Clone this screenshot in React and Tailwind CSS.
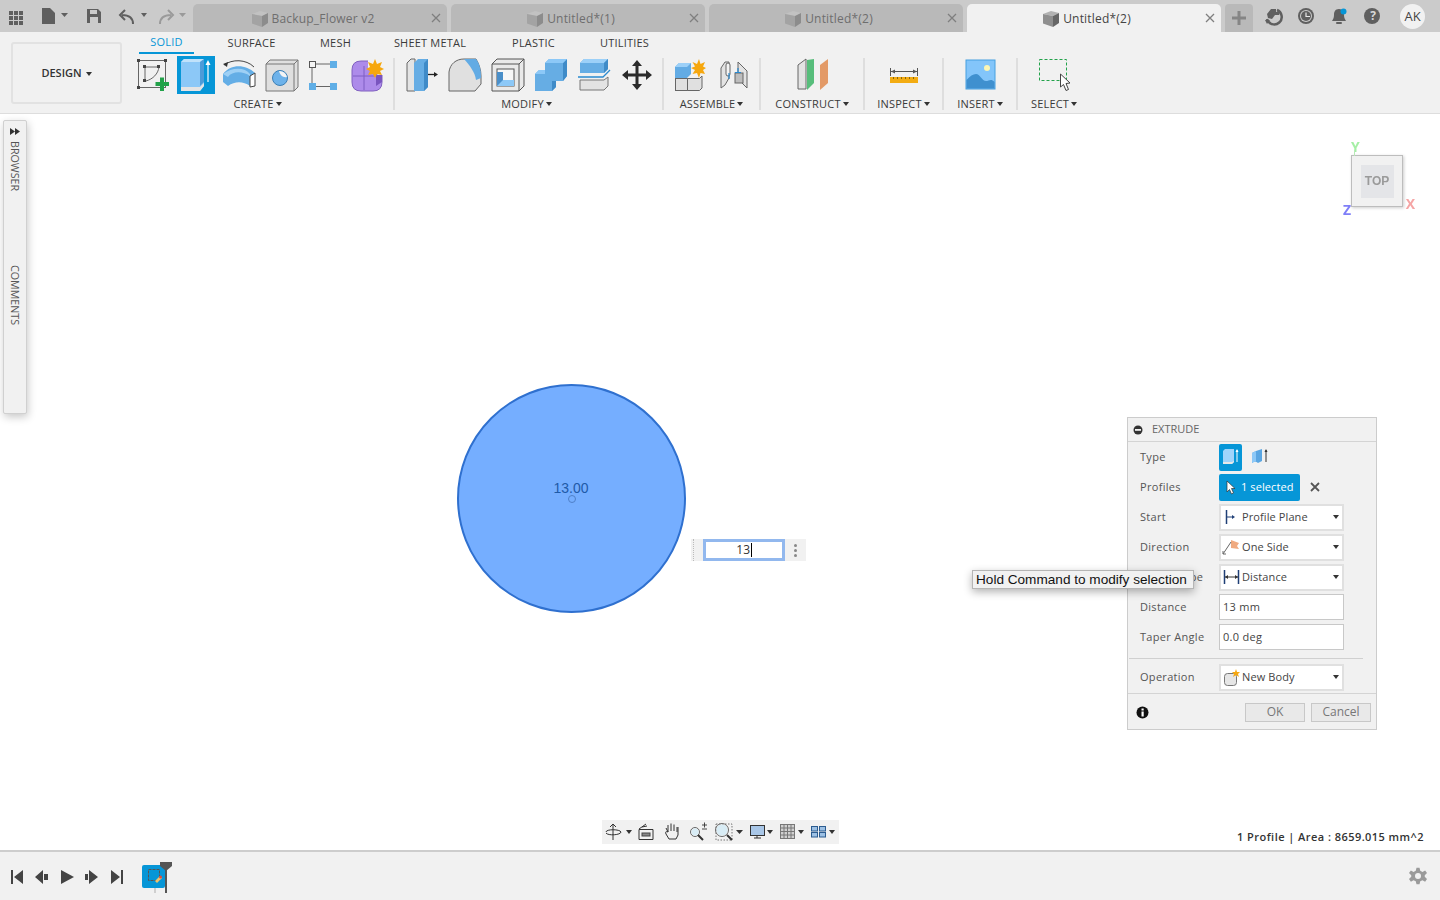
const UI = { fontFamily: '"Open Sans", "DejaVu Sans", sans-serif' };

function Ico({ x, w = 43, y = 55, h = 40, children }) {
  return (
    <svg width={w} height={h} viewBox={`${x} ${y} ${w} ${h}`} className="block shrink-0">
      {children}
    </svg>
  );
}

function Caret({ className = "" }) {
  return <span className={`inline-block w-0 h-0 border-x-[3px] border-x-transparent border-t-[4px] border-t-[#333] ${className}`} />;
}

function TabCube({ dark }) {
  const top = dark ? "#b2b2b2" : "#c2c2c2";
  const left = dark ? "#8f8f8f" : "#a3a3a3";
  const right = dark ? "#666" : "#8c8c8c";
  return (
    <svg width="16" height="16" viewBox="0 0 16 16" className="block shrink-0">
      <path d="M0 3 L8 0 L16 2 L10 5Z" fill={top} />
      <path d="M0 3 L10 5 V16 L0 12.500Z" fill={left} />
      <path d="M10 5 L16 2 V12 L10 16Z" fill={right} />
    </svg>
  );
}

function Tab({ label, active }) {
  return (
    <div className={`relative w-[254px] mr-[4px] h-[28px] mt-[4px] rounded-t-[5px] flex items-center shrink-0 ${active ? "bg-[#f1f1f1] text-[#444]" : "bg-[#b9b9b9] text-[#6e6e6e]"}`}>
      <div className="flex items-center gap-[4px] w-full justify-center pr-[14px] pt-[1px] text-[12px] tracking-[0.2px]">
        <TabCube dark={active} />
        <span>{label}</span>
      </div>
      <svg width="10" height="10" viewBox="0 0 10 10" className="absolute right-[6px] top-[9px]">
        <path d="M1 1 L9 9 M9 1 L1 9" stroke="#7f7f7f" strokeWidth="1.3" />
      </svg>
    </div>
  );
}

function TitleBar() {
  return (
    <div className="flex h-[32px] bg-[#cbcbcb] shrink-0">
      <svg width="193" height="32" viewBox="0 0 193 32" className="block shrink-0">
        <g fill="#5f5f5f">
          {[9, 14, 19].map((x) => [11, 16, 21].map((y) => <rect key={`${x}${y}`} x={x} y={y} width="4" height="4" />))}
          <path d="M42 8 H50 L55 13 V24 H42Z" />
          <path d="M61 13 H68 L64.5 17Z" />
          <path d="M87 9 H98 L101 12 V23 H87Z M90 10 V14 H97 V10Z M90 17 V23 H98 V17Z" fillRule="evenodd" />
          <path d="M141 13 H147 L144 17Z" />
        </g>
        <path d="M133 24 C133 18 129 15 122 15 M125 10 L120 15 L125 20" fill="none" stroke="#5f5f5f" strokeWidth="2" />
        <path d="M160 24 C160 18 164 15 171 15 M168 10 L173 15 L168 20" fill="none" stroke="#9a9a9a" strokeWidth="2" />
        <path d="M179 13 H186 L182.500 17Z" fill="#9a9a9a" />
      </svg>
      <Tab label="Backup_Flower v2" />
      <Tab label="Untitled*(1)" />
      <Tab label="Untitled*(2)" />
      <Tab label="Untitled*(2)" active />
      <div className="w-[28px] h-[28px] mt-[4px] rounded-t-[4px] bg-[#b9b9b9] flex items-center justify-center shrink-0">
        <svg width="14" height="14" viewBox="0 0 14 14"><path d="M7 0 V14 M0 7 H14" stroke="#858585" strokeWidth="3" /></svg>
      </div>
      <svg width="140" height="32" viewBox="1253 0 140 32" className="block shrink-0">
        <path d="M1277 10 A7.500 7.500 0 1 1 1267 19" fill="none" stroke="#5f5f5f" strokeWidth="2.500" />
        <path d="M1271 9 H1276 V12 H1280 L1279 15 L1275 15 L1272 19 L1268 18 L1267 14Z" fill="#5f5f5f" />
        <path d="M1265 20 L1270 20 L1267 24Z" fill="#5f5f5f" />
        <circle cx="1306" cy="16" r="8" fill="#5f5f5f" />
        <circle cx="1306" cy="16" r="6" fill="#cbcbcb" />
        <circle cx="1306" cy="16" r="5" fill="#5f5f5f" />
        <path d="M1306 12.500 V16.500 H1310" fill="none" stroke="#e8e8e8" strokeWidth="1.200" />
        <path d="M1339 9 C1343 9 1344 12 1344 15 C1344 18 1345 19 1346 21 H1332 C1333 19 1334 18 1334 15 C1334 12 1335 9 1339 9Z" fill="#5f5f5f" />
        <rect x="1336" y="22" width="6" height="2" rx="1" fill="#5f5f5f" />
        <circle cx="1343.500" cy="11.500" r="3" fill="#0696d7" />
        <circle cx="1372" cy="16" r="8" fill="#5f5f5f" />
      </svg>
      <div className="relative">
        <span className="absolute left-[-25px] top-[9px] w-[10px] text-center text-[12px] font-bold leading-[14px] text-[#d8d8d8]">?</span>
      </div>
      <div className="ml-[7px] mt-[4px] w-[25px] h-[25px] rounded-full bg-[#f1f1f1] flex items-center justify-center text-[13px] text-[#444]">AK</div>
    </div>
  );
}

const RTABS = [
  ["SOLID", "w-[55px]"],
  ["SURFACE", "w-[115px]"],
  ["MESH", "w-[53px]"],
  ["SHEET METAL", "w-[136px]"],
  ["PLASTIC", "w-[71px]"],
  ["UTILITIES", "w-[111px]"],
];

function Sep() {
  return <div className="w-[2px] h-[52px] mt-[3px] bg-[#dedede] shrink-0" />;
}

function Group({ label, className, labelClass = "", children }) {
  return (
    <div className={`flex flex-col shrink-0 ${className}`}>
      <div className="flex h-[40px]">{children}</div>
      <div className={`flex items-center justify-center gap-[2px] h-[14px] mt-[2px] pt-[1px] text-[11px] tracking-[0.2px] text-[#3a3a3a] ${labelClass}`}>
        {label}
        <Caret className="mb-[2px] !border-x-[3px] !border-t-[4px]" />
      </div>
    </div>
  );
}

function CreateIcons() {
  return (
    <>
      <Ico x={133}>
        <rect x="138.500" y="60.500" width="27" height="27" fill="none" stroke="#666" />
        <path d="M145 67 H158 M145 67 V80" stroke="#666" fill="none" />
        <path d="M159 67 C158 74 153 79 146 81" stroke="#666" fill="none" />
        {[[137, 59], [164, 59], [137, 86], [143, 65], [157, 65], [143, 79]].map(([a, b]) => <rect key={`${a}-${b}`} x={a} y={b} width="3" height="3" fill="#444" />)}
        <path d="M162 77.500 V91 M155.500 84 H169" stroke="#22a24a" strokeWidth="4" />
      </Ico>
      <Ico x={176}>
        <rect x="177" y="56" width="38" height="38" fill="#0696d7" />
        <path d="M181 62 L184 59 H204 L204 86 L200 91 H181Z" fill="#8cc8f7" />
        <path d="M181 62 L184 59 H204 L200 62Z" fill="#c0e2fb" />
        <path d="M200 62 L204 59 V82 L200 86Z" fill="#4d9bd8" />
        <path d="M181 87 H200 L204 83 V86 L200 91 H181Z" fill="#e4e4e4" />
        <path d="M208 82 V63" stroke="#fff" strokeWidth="1.200" />
        <path d="M205.500 65 L208 60 L210.500 65Z" fill="#fff" />
      </Ico>
      <Ico x={219}>
        <path d="M224 65 C232 59 246 59 254 67" fill="none" stroke="#444" strokeWidth="1" />
        <path d="M223 64 L228 62 L227 67Z" fill="#333" />
        <path d="M223 74 C232 63 246 65 255 73 L250 86 C243 81 235 81 228 86 L223 82Z" fill="#64aee6" />
        <path d="M223 74 C232 67 245 67 250 74 L250 76 C243 71 232 71 228 77Z" fill="#9ed0f5" />
        <path d="M250 76 L255 73 L255 86 L250 87Z" fill="#fff" stroke="#444" />
      </Ico>
      <Ico x={262}>
        <path d="M266 64 L270 60 H298 V87 L294 91 H266Z" fill="#dfdfdf" stroke="#777" />
        <path d="M266 64 H294 V91 M294 64 L298 60" fill="none" stroke="#777" />
        <circle cx="280" cy="78" r="7.500" fill="#6db2ea" stroke="#3c7fb5" />
        <path d="M279 71 A7.500 7.500 0 0 1 287 77 C283 78 280 75 279 71Z" fill="#f4f4f4" />
      </Ico>
      <Ico x={305}>
        <path d="M315 64 H330 M312 67 V83 M316 86.500 H330" stroke="#666" />
        <rect x="309.500" y="61.500" width="6" height="6" fill="#f4f4f4" stroke="#555" />
        <rect x="330" y="61" width="7" height="7" fill="#5faee6" />
        <rect x="309" y="83" width="7" height="7" fill="#5faee6" />
        <rect x="330" y="83" width="7" height="7" fill="#5faee6" />
      </Ico>
      <Ico x={348} w={45}>
        <path d="M352 70 Q352 61 361 61 H374 Q382 61 382 70 V82 Q382 91 373 91 H361 Q352 91 352 82Z" fill="#ad8bea" stroke="#8060c0" />
        <path d="M353 76 H376 M364 66 V90" stroke="#7f5ec4" />
        <path d="M376 73 L382 70 V82 L376 86Z" fill="#7a55bf" />
        <path d="M368 60 H384 V75 H378 L368 68Z" fill="#f1f1f1" />
        <path d="M375 59 L377 64 L382 62 L380 67 L384 69 L380 71 L382 75 L377 74 L375 78 L373 74 L368 75 L370 71 L366 69 L370 67 L368 62 L373 64Z" fill="#f6a70e" />
      </Ico>
    </>
  );
}

function ModifyIcons() {
  return (
    <>
      <Ico x={395} w={48}>
        <path d="M407 63 L411 59 H415 V91 H407Z" fill="#e4e4e4" stroke="#666" />
        <path d="M414 63 L418 59 H428 V87 L424 91 H414Z" fill="#66ade4" />
        <path d="M424 63 L428 59 V87 L424 91Z" fill="#3f8bc8" />
        <path d="M428 74.500 H435" stroke="#222" strokeWidth="1.300" />
        <path d="M434 72 L438 74.500 L434 77Z" fill="#222" />
      </Ico>
      <Ico x={443}>
        <path d="M449 72 C450 64 456 59 464 59 H476 C479 64 481 70 481 76 V84 L475 91 H449Z" fill="#e0e0e0" stroke="#666" />
        <path d="M464 59 H476 C480 64 481 70 481 78 L476 80 C475 72 470 66 464 59Z" fill="#62abe4" />
      </Ico>
      <Ico x={486}>
        <path d="M492 64 L497 59 H524 V86 L519 91 H492Z" fill="#e9e9e9" stroke="#555" />
        <path d="M492 64 H519 V91 M519 64 L524 59" stroke="#555" fill="none" />
        <rect x="497" y="69" width="17" height="17" fill="#f7f7f7" stroke="#555" />
        <path d="M497 72 H503 V80 H514 V86 H497Z" fill="#4a8fc9" />
        <path d="M503 80 H514 V86 H497Z" fill="#8cc8f7" />
      </Ico>
      <Ico x={529}>
        <path d="M535 74 L539 70 H545 V63 L549 59 H567 V76 L563 81 H556 V87 L552 91 H535Z" fill="#66ade4" />
        <path d="M563 63 L567 59 V76 L563 81Z M552 81 H556 V87 L552 91Z" fill="#3f8bc8" />
        <path d="M545 63 L549 59 H567 L563 63Z M535 74 L539 70 H545 V74Z" fill="#8cc8f7" />
      </Ico>
      <Ico x={572}>
        <path d="M580 63 L584 59 H608 V69 L604 73 H580Z" fill="#66ade4" />
        <path d="M580 63 L584 59 H608 L604 63Z" fill="#9cd0f8" />
        <path d="M604 63 L608 59 V69 L604 73Z" fill="#3f8bc8" />
        <path d="M578 77 H603 L610 70" stroke="#2a8ad0" strokeWidth="1.300" fill="none" />
        <path d="M580 80 H604 L608 77 V86 L604 90 H580Z" fill="#e3e3e3" stroke="#777" />
      </Ico>
      <Ico x={615} w={47}>
        <path d="M637 60 L642 66 H638.500 V73.500 H646 V70 L652 75 L646 80 V76.500 H638.500 V84 H642 L637 90 L632 84 H635.500 V76.500 H628 V80 L622 75 L628 70 V73.500 H635.500 V66 H632Z" fill="#2b2b2b" />
      </Ico>
    </>
  );
}

function AssembleIcons() {
  return (
    <>
      <Ico x={664} w={47}>
        <rect x="675.500" y="78.500" width="12" height="12" fill="#e0e0e0" stroke="#666" />
        <path d="M687.500 78.500 H699.500 L702 76 V88 L699.500 90.500 H687.500Z" fill="#e0e0e0" stroke="#666" />
        <path d="M675 67 L679 63 H691 V74 L687 78 H675Z" fill="#62abe4" />
        <path d="M675 67 L679 63 H691 L687 67Z" fill="#9cd0f8" />
        <path d="M699 59 L700.500 64 L705 62 L703 66.500 L706 68 L703 70 L705 74 L700.500 73 L699 78 L697 73 L692.500 74 L695 70 L691 68 L695 66.500 L692.500 62 L697 64Z" fill="#f6a70e" />
      </Ico>
      <Ico x={711} w={48}>
        <path d="M721 68 L725 62 H729 V78 L725 85 L721 88Z" fill="#e3e3e3" stroke="#666" />
        <path d="M738 62 L747 71 V88 L738 79Z" fill="#e3e3e3" stroke="#666" />
        <rect x="735" y="73" width="8" height="10" fill="#bdbdbd" stroke="#666" />
        <rect x="726" y="63" width="4" height="13" rx="2" fill="#f4f4f4" stroke="#666" />
        <path d="M729 73 V79 M738 68 V73" stroke="#2a8ad0" strokeWidth="1.200" />
        <path d="M735 72.500 H741" stroke="#2a8ad0" />
      </Ico>
    </>
  );
}

function Panels() {
  return (
    <div className="flex ml-[11px]">
      <Group label="CREATE" className="w-[260px]" labelClass="pr-[11px]"><CreateIcons /></Group>
      <Sep />
      <Group label="MODIFY" className="w-[267px]" labelClass="pr-[4px]"><ModifyIcons /></Group>
      <Sep />
      <Group label="ASSEMBLE" className="w-[95px]"><AssembleIcons /></Group>
      <Sep />
      <Group label="CONSTRUCT" className="w-[102px]">
        <Ico x={761} w={102}>
          <path d="M798 65 L806 59 V89 L798 89Z" fill="#e3e3e3" stroke="#666" />
          <path d="M807 60 L814 59 V83 L807 90Z" fill="#57bd7b" />
          <path d="M820 65 L828 59 V83 L820 90Z" fill="#e39a67" />
        </Ico>
      </Group>
      <Sep />
      <Group label="INSPECT" className="w-[77px]">
        <Ico x={865} w={77}>
          <path d="M890.500 68 V76 M917.500 68 V76" stroke="#555" />
          <path d="M891 71.500 H917" stroke="#555" />
          <path d="M891 71.500 L895 69.500 V73.500Z M917 71.500 L913 69.500 V73.500Z" fill="#555" />
          <rect x="890" y="77" width="28" height="6" fill="#f3ac12" />
          <path d="M893.500 77 V79 M897.500 77 V79 M901.500 77 V79 M905.500 77 V79 M909.500 77 V79 M913.500 77 V79" stroke="#8a6508" />
        </Ico>
      </Group>
      <Sep />
      <Group label="INSERT" className="w-[72px]">
        <Ico x={944} w={72}>
          <rect x="966" y="60" width="29" height="29" fill="#83c5fa" stroke="#46a0e0" />
          <circle cx="987" cy="68" r="3" fill="#fbf6b5" />
          <path d="M966.500 88.500 V80 C970 76 973 74 976 74 C980 74 982 81 986 81 C989 81 991 78 994.500 82 V88.500Z" fill="#3f90cf" />
        </Ico>
      </Group>
      <Sep />
      <Group label="SELECT" className="w-[72px]">
        <Ico x={1018} w={72}>
          <rect x="1039.500" y="59.500" width="27" height="21" fill="none" stroke="#22a24a" strokeDasharray="3 2" />
          <path d="M1060.500 74 V87 L1063.500 84.500 L1066 90.500 L1068.500 89.500 L1066 83.500 L1070 83Z" fill="#fff" stroke="#444" />
        </Ico>
      </Group>
    </div>
  );
}

function Ribbon() {
  return (
    <div className="flex h-[82px] bg-[#f1f1f1] border-b border-b-[#dddddd] shrink-0 relative z-10">
      <div className="ml-[11px] mt-[10px] w-[111px] h-[62px] rounded-[3px] border-2 border-[#e2e2e2] flex items-center justify-center gap-[4px] pt-[1px] text-[11px] font-semibold text-[#333] shrink-0">
        DESIGN
        <Caret className="!border-x-[3px] !border-t-[4px]" />
      </div>
      <div className="flex flex-col">
        <div className="flex h-[23px] ml-[17px]">
          {RTABS.map(([t, w], i) => (
            <div key={t} className={`${w} h-[22px] pt-[1px] flex items-center justify-center text-[11px] tracking-[0.2px] ${i === 0 ? "text-[#0696d7] border-b-2 border-b-[#0696d7]" : "text-[#3a3a3a]"}`}>{t}</div>
          ))}
        </div>
        <Panels />
      </div>
    </div>
  );
}

function SidePanel() {
  return (
    <div className="absolute left-[3px] top-[6px] w-[24px] h-[294px] bg-[#f1f1f1] border border-[#d0d0d0] rounded-[2px] shadow-[1px_3px_8px_rgba(0,0,0,0.22)] flex flex-col items-center pr-[1px]">
      <svg width="10" height="7" viewBox="0 0 10 7" className="mt-[7px]"><path d="M0 0 L5 3.500 L0 7Z M5 0 L10 3.500 L5 7Z" fill="#333" /></svg>
      <div className="[writing-mode:vertical-rl] text-[10.700px] mt-[6px] h-[124px] text-[#555]">BROWSER</div>
      <div className="[writing-mode:vertical-rl] text-[10.700px] text-[#555]">COMMENTS</div>
    </div>
  );
}

function ViewCube() {
  return (
    <div className="absolute left-[1351px] top-[41px] w-[52px] h-[52px] bg-[#f1f1f1] border border-[#bdbdbd] shadow-[1px_1px_3px_rgba(0,0,0,0.2)] flex items-center justify-center">
      <div className="w-[33px] h-[33px] bg-[#e4e5e8] flex items-center justify-center text-[12px] font-bold text-[#9a9a9a] blur-[0.5px]" style={{ fontFamily: '"Liberation Sans", sans-serif' }}>TOP</div>
      <span className="absolute left-[-1px] top-[-17px] text-[14px] leading-[15px] font-bold text-[#a5efa5] blur-[0.4px]">Y</span>
      <span className="absolute left-[2px] top-[-6px] w-[1px] h-[6px] bg-[#b8e8b8]" />
      <span className="absolute right-[-13px] top-[40px] text-[14px] leading-[15px] font-bold text-[#f5a5a5] blur-[0.4px]">X</span>
      <span className="absolute left-[-9px] top-[46px] text-[14px] leading-[15px] font-bold text-[#7f7ff8] blur-[0.4px]">Z</span>
    </div>
  );
}

function Profile() {
  return (
    <>
      <div className="absolute left-[457px] top-[270px] w-[229px] h-[229px] rounded-full bg-[#75aeff] border-2 border-[#2f70cf]" />
      <span className="absolute left-[541px] top-[365px] w-[60px] text-center text-[14px] leading-[18px] text-[#1f5aa8]" style={{ fontFamily: '"Liberation Sans", sans-serif' }}>13.00</span>
      <div className="absolute left-[568px] top-[381px] w-[8px] h-[8px] rounded-full border border-[#4f80c8]" />
      <div className="absolute left-[691px] top-[425px] w-[115px] h-[22px] bg-[#f1f1f1] flex items-center">
        <div className="w-[10px] h-full ml-[2px] border-l border-dotted border-l-[#bbb]" />
        <div className="w-[82px] h-[22px] border-[3px] border-[#92b8ee] bg-white flex items-center justify-end pr-[30px] text-[12px] text-[#333]">
          <span className="leading-[14px]">13</span>
          <span className="w-[1px] h-[14px] bg-black ml-[1px]" />
        </div>
        <div className="ml-[9px] flex flex-col gap-[2px]">
          <span className="w-[3px] h-[3px] rounded-full bg-[#888]" />
          <span className="w-[3px] h-[3px] rounded-full bg-[#888]" />
          <span className="w-[3px] h-[3px] rounded-full bg-[#888]" />
        </div>
      </div>
    </>
  );
}

function Row({ label, children }) {
  return (
    <div className="flex items-center h-[30px]">
      <div className="w-[91px] pl-[12px] text-[#555] tracking-[0.3px] whitespace-nowrap shrink-0">{label}</div>
      {children}
    </div>
  );
}

function Select({ icon, label }) {
  return (
    <div className="w-[125px] h-[27px] bg-white border-2 border-[#e0e0e0] flex items-center relative">
      <svg width="20" height="20" viewBox="0 0 20 20" className="shrink-0">{icon}</svg>
      <span className="ml-[1px] text-[#444] tracking-[0.1px]">{label}</span>
      <Caret className="absolute right-[3px] top-[9px]" />
    </div>
  );
}

function TextField({ value }) {
  return <div className="w-[125px] h-[26px] bg-white border border-[#c8c8c8] flex items-center pl-[3px] text-[#444] tracking-[0.3px]">{value}</div>;
}

function Extrude() {
  return (
    <div className="absolute left-[1127px] top-[303px] w-[250px] h-[313px] bg-[#f1f1f1] border border-[#cccccc] text-[11px]">
      <div className="h-[24px] border-b border-b-[#d4d4d4] flex items-center pl-[5px] gap-[9px] text-[#666]">
        <svg width="10" height="10" viewBox="0 0 10 10"><circle cx="5" cy="5" r="4.500" fill="#333" /><rect x="2" y="4" width="6" height="1.800" fill="#f1f1f1" /></svg>
        <span>EXTRUDE</span>
      </div>
      <Row label="Type">
        <div className="w-[23px] h-[27px] rounded-[2px] bg-[#0696d7] flex items-center justify-center">
          <svg width="18" height="18" viewBox="0 0 18 18">
            <path d="M1 3 L3 1 H12 V14 L10 16 H1Z" fill="#9fd4fb" />
            <path d="M1 14 H10 L12 13 V14 L10 16 H1Z" fill="#e8e8e8" />
            <path d="M15 14 V2" stroke="#fff" />
            <path d="M13.500 4 L15 1 L16.500 4Z" fill="#fff" />
          </svg>
        </div>
        <svg width="18" height="18" viewBox="0 0 18 18" className="ml-[9px]">
          <path d="M1 5 L5 3 L11 1 V13 L7 15 C5 13 3 13 1 15Z" fill="#5aa6e2" />
          <path d="M1 5 L5 3 V13 L1 15Z" fill="#8cc8f7" />
          <path d="M15 14 V2" stroke="#333" />
          <path d="M13.500 4 L15 1 L16.500 4Z" fill="#333" />
        </svg>
      </Row>
      <Row label="Profiles">
        <div className="w-[81px] h-[27px] rounded-[2px] bg-[#0696d7] flex items-center pl-[7px] text-white tracking-[0.1px]">
          <svg width="11" height="15" viewBox="0 0 11 15" className="mr-[4px] shrink-0"><path d="M1 1 V12 L3.500 9.500 L5.500 14 L7.500 13 L5.500 8.500 L9 8.500Z" fill="#fff" stroke="#333" strokeWidth=".7" /></svg>
          <span>1 selected</span>
        </div>
        <svg width="10" height="10" viewBox="0 0 10 10" className="ml-[10px]"><path d="M1 1 L9 9 M9 1 L1 9" stroke="#555" strokeWidth="1.800" /></svg>
      </Row>
      <Row label="Start">
        <Select label="Profile Plane" icon={<><path d="M5.500 3 V17" stroke="#1f3f76" strokeWidth="1.500" /><path d="M6 10 H12" stroke="#1f3f76" /><path d="M11 8 L14 10 L11 12Z" fill="#1f3f76" /></>} />
      </Row>
      <Row label="Direction">
        <Select label="One Side" icon={<><path d="M10 3 L18 6 L16 9 L18 12 L10 11Z" fill="#f0aa80" /><path d="M10 5 L2 17" stroke="#666" /><path d="M2 14 V17 H5" fill="none" stroke="#666" /></>} />
      </Row>
      <Row label="Extent Type">
        <Select label="Distance" icon={<><path d="M3.500 3 V17 M17.500 3 V17" stroke="#1f3f76" strokeWidth="1.500" /><path d="M4 10 H17" stroke="#333" /><path d="M7 8 L4 10 L7 12Z M14 8 L17 10 L14 12Z" fill="#333" /></>} />
      </Row>
      <Row label="Distance"><TextField value="13 mm" /></Row>
      <Row label="Taper Angle"><TextField value="0.0 deg" /></Row>
      <div className="h-[7px] ml-[1px] mr-[13px] border-b border-b-[#d0d0d0]" />
      <div className="h-[3px]" />
      <Row label="Operation">
        <Select label="New Body" icon={<><rect x="3.500" y="6.500" width="12" height="12" rx="3" fill="#e6e6e6" stroke="#777" /><path d="M15 2 L16 5 L19 5 L17 7 L18 10 L15 8 L12 10 L13 7 L11 5 L14 5Z" fill="#f6a70e" /></>} />
      </Row>
      <div className="h-[37px] mt-[1px] border-t border-t-[#d4d4d4] flex items-center">
        <svg width="13" height="13" viewBox="0 0 13 13" className="ml-[8px]"><circle cx="6.500" cy="6.500" r="6" fill="#111" /><rect x="5.500" y="5.500" width="2.200" height="5" fill="#fff" /><rect x="5.500" y="2.500" width="2.200" height="2" fill="#fff" /></svg>
        <div className="ml-[96px] w-[60px] h-[19px] bg-[#e9e9e9] border border-[#c8c8c8] flex items-center justify-center text-[12px] text-[#777]">OK</div>
        <div className="ml-[6px] w-[60px] h-[19px] bg-[#e9e9e9] border border-[#c8c8c8] flex items-center justify-center text-[12px] text-[#777]">Cancel</div>
      </div>
    </div>
  );
}

function Tooltip() {
  return (
    <div className="absolute left-[972px] top-[456px] w-[222px] h-[19px] bg-[#f1f1f1] border border-[#b5b5b5] shadow-[0_3px_8px_rgba(0,0,0,0.3)] flex items-center pl-[3px] pt-[1px] whitespace-nowrap text-[13.600px] text-[#111]" style={{ fontFamily: '"Liberation Sans", Arial, sans-serif' }}>
      Hold Command to modify selection
    </div>
  );
}

function NavBar() {
  return (
    <div className="absolute left-[602px] top-[706px] w-[237px] h-[24px] bg-[#f1f1f1]">
      <svg width="237" height="24" viewBox="602 820 237 24" className="block">
        <g fill="none" stroke="#333" strokeWidth="1">
          <path d="M613 824 V840 M610 827 L613 824 L616 827 M606 832 C606 829 620 829 621 832 C621 835 608 836 606 833" />
          <path d="M639 829.500 H653 V839.500 H639Z M642 827 L647 826 M639 829 L646 824" />
          <rect x="642" y="833" width="8" height="3" fill="#888" stroke="#444" />
          <path d="M668 832 L666 828 M668 832 V825 M671 831 V823.500 M674 831 V824.500 M677 832 V827 M668 832 C666 831 665 832 666 834 L669 839 H676 L678 835 V827" />
          <circle cx="695" cy="832" r="4.500" stroke="#666" />
          <circle cx="722" cy="830" r="6.500" stroke="#666" />
          <path d="M702 825 H707 M704.500 822.500 V827.500 M702 829 H707" strokeWidth=".9" />
          <path d="M716 824 H732 V840 H716Z" strokeDasharray="1.500 1.500" stroke="#777" />
        </g>
        <path d="M698 835 L703 840 M727 835 L732 840" stroke="#333" strokeWidth="2" />
        <circle cx="695" cy="832" r="3.500" fill="#d8ecf5" />
        <circle cx="722" cy="830" r="5.500" fill="#d8ecf5" />
        <rect x="750.500" y="825.500" width="14" height="10" fill="#a9c7e8" stroke="#333" />
        <path d="M754 838 H761 M757 836 V838" stroke="#333" />
        <g stroke="#777">
          <rect x="780.500" y="824.500" width="14" height="14" fill="#d0d0d0" />
          <path d="M784 824 V839 M787.500 824 V839 M791 824 V839 M780 828 H795 M780 831.500 H795 M780 835 H795" />
        </g>
        <g fill="#9cc0e4" stroke="#2c5c90">
          <rect x="811.500" y="826.500" width="6" height="4.500" />
          <rect x="819.500" y="826.500" width="6" height="4.500" />
          <rect x="811.500" y="832.500" width="6" height="4.500" />
          <rect x="819.500" y="832.500" width="6" height="4.500" />
        </g>
        <g fill="#333">
          <path d="M626 830 H632 L629 834Z M736 830 H743 L739.500 834Z M767 830 H773 L770 834Z M798 830 H804 L801 834Z M829 830 H835 L832 834Z" />
        </g>
      </svg>
    </div>
  );
}

function Timeline() {
  return (
    <div className="h-[50px] bg-[#f1f1f1] border-t-2 border-t-[#cdcdcd] flex items-center shrink-0">
      <svg width="200" height="48" viewBox="0 852 200 48" className="block shrink-0">
        <g fill="#444">
          <path d="M11 870 H13 V884 H11Z M23 870 V884 L14 877Z" />
          <path d="M44 874 H48 V880 H44Z M43 870 V884 L35 877Z" />
          <path d="M61 870 V884 L74 877Z" />
          <path d="M85 874 H88 V880 H85Z M89 870 V884 L98 877Z" />
          <path d="M111 870 V884 L120 877Z M121 870 H123 V884 H121Z" />
        </g>
        <rect x="154" y="888" width="2" height="5" fill="#cfcfcf" />
        <rect x="142" y="865" width="23" height="23" rx="2" fill="#0696d7" />
        <rect x="148.500" y="869.500" width="11" height="11" fill="none" stroke="#555" strokeDasharray="3 1" />
        <path d="M155 881 L160 876 L162 878 L157 883Z" fill="#efc26c" />
        <circle cx="160.500" cy="877" r="1.500" fill="#e04a3a" />
        <path d="M160 862 H172 V866 L166 871 L160 866Z" fill="#555" />
        <rect x="165" y="868" width="2" height="25" fill="#555" />
      </svg>
      <svg width="18" height="18" viewBox="0 0 24 24" className="ml-auto mr-[13px]">
        <path d="M10 1 H14 L15 5 L18 6.500 L21.500 4.500 L24 8 L21 11 V13 L24 16 L21.500 19.500 L18 17.500 L15 19 L14 23 H10 L9 19 L6 17.500 L2.500 19.500 L0 16 L3 13 V11 L0 8 L2.500 4.500 L6 6.500 L9 5Z M12 8 A4 4 0 1 0 12 16 A4 4 0 1 0 12 8Z" fill="#9a9a9a" fillRule="evenodd" />
      </svg>
    </div>
  );
}

export default function App() {
  return (
    <div className="w-[1440px] h-[900px] flex flex-col overflow-hidden bg-white" style={UI}>
      <TitleBar />
      <Ribbon />
      <div className="relative flex-1 bg-white">
        <SidePanel />
        <ViewCube />
        <Profile />
        <Extrude />
        <Tooltip />
        <NavBar />
        <div className="absolute right-[16px] top-[716px] text-[11px] leading-[14px] font-semibold text-[#333] tracking-[0.45px]">1 Profile | Area : 8659.015 mm^2</div>
      </div>
      <Timeline />
    </div>
  );
}
